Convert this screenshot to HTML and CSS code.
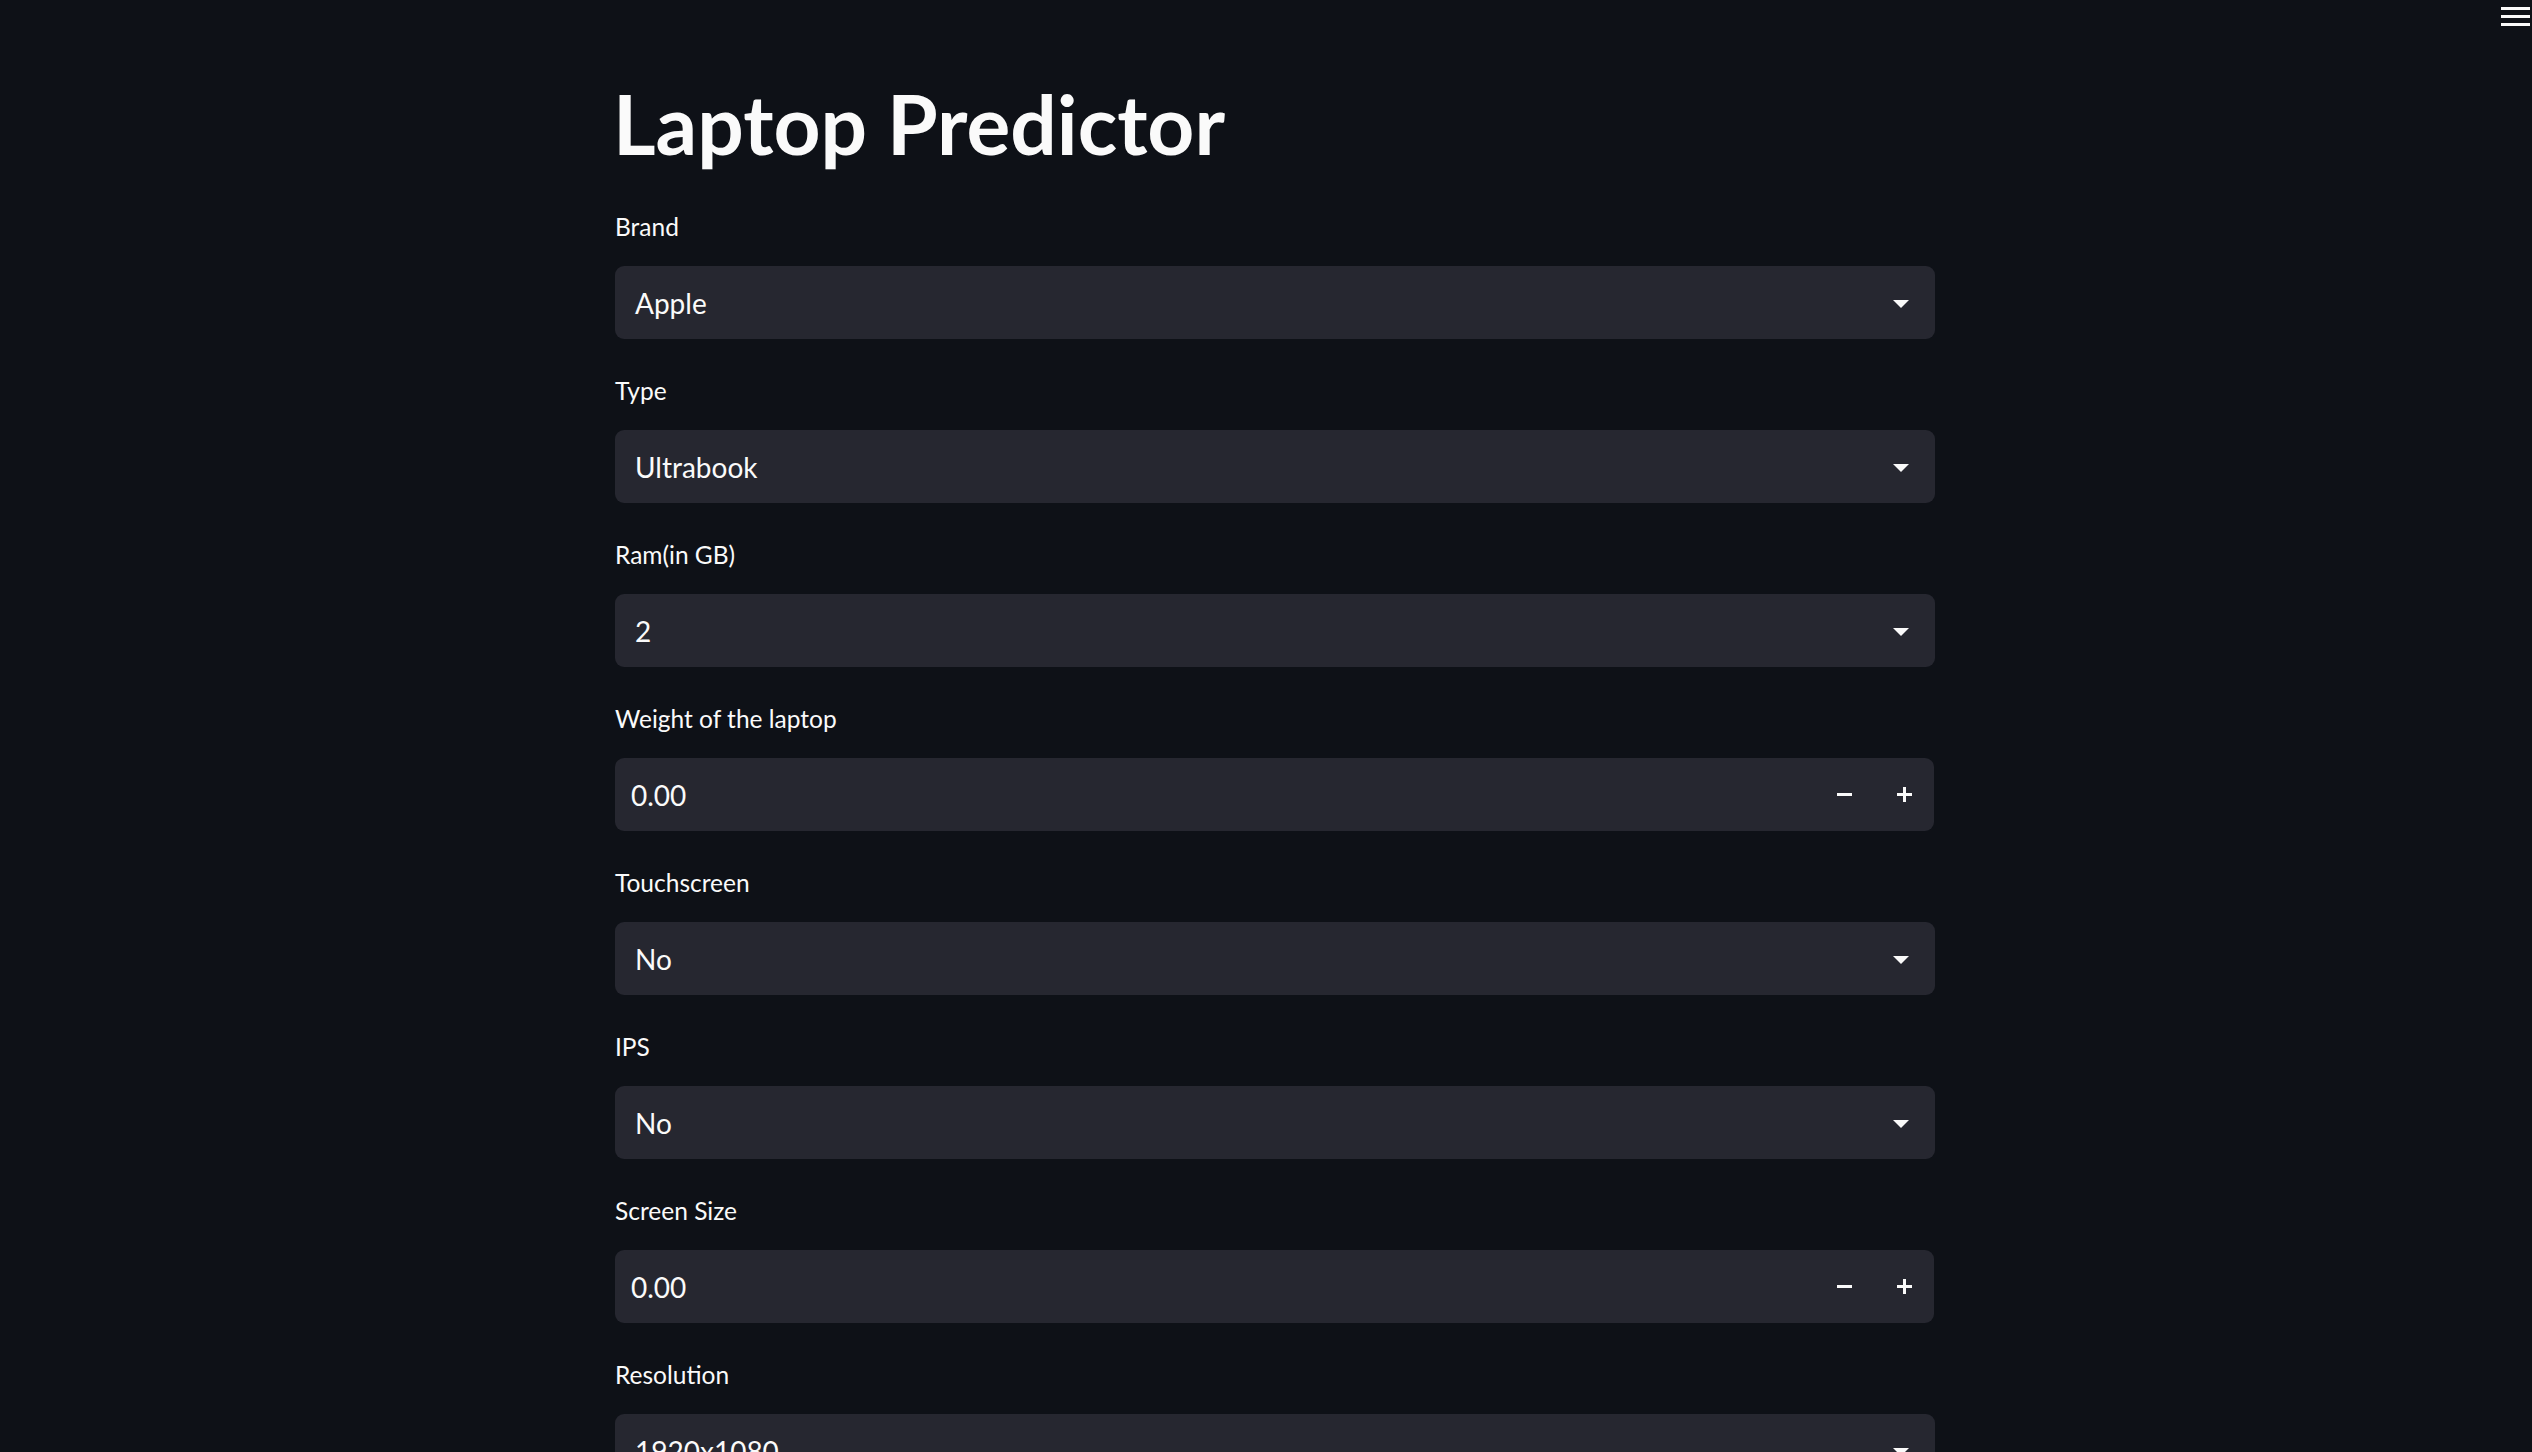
FILE: index.html
```html
<!DOCTYPE html>
<html lang="en">
<head>
<meta charset="utf-8">
<title>Laptop Predictor</title>
<link rel="stylesheet" href="styles.css">
</head>
<body>
<header class="app-header">
  <button class="menu-btn" aria-label="Menu">
    <span class="bar"></span><span class="bar"></span><span class="bar"></span>
  </button>
</header>
<main class="block">
  <h1 class="title">Laptop Predictor</h1>

  <div class="field">
    <label class="label">Brand</label>
    <div class="select"><span class="value">Apple</span><span class="caret"></span></div>
  </div>

  <div class="field">
    <label class="label">Type</label>
    <div class="select"><span class="value">Ultrabook</span><span class="caret"></span></div>
  </div>

  <div class="field">
    <label class="label">Ram(in GB)</label>
    <div class="select"><span class="value">2</span><span class="caret"></span></div>
  </div>

  <div class="field">
    <label class="label">Weight of the laptop</label>
    <div class="number">
      <span class="num-value">0.00</span>
      <button class="step" aria-label="Decrement"><span class="minus"></span></button>
      <button class="step" aria-label="Increment"><span class="plus"></span></button>
    </div>
  </div>

  <div class="field">
    <label class="label">Touchscreen</label>
    <div class="select"><span class="value">No</span><span class="caret"></span></div>
  </div>

  <div class="field">
    <label class="label">IPS</label>
    <div class="select"><span class="value">No</span><span class="caret"></span></div>
  </div>

  <div class="field">
    <label class="label">Screen Size</label>
    <div class="number">
      <span class="num-value">0.00</span>
      <button class="step" aria-label="Decrement"><span class="minus"></span></button>
      <button class="step" aria-label="Increment"><span class="plus"></span></button>
    </div>
  </div>

  <div class="field">
    <label class="label">Resolution</label>
    <div class="select"><span class="value">1920x1080</span><span class="caret"></span></div>
  </div>
</main>
</body>
</html>
```
FILE: styles.css
```css
html, body {
  margin: 0;
  padding: 0;
  height: 100%;
  overflow: hidden;
}
body {
  background: #0e1117;
  color: #fafafa;
  font-family: Lato, "Noto Sans", sans-serif;
}
.app-header {
  position: absolute;
  top: 0;
  right: 0;
}
.menu-btn {
  display: flex;
  flex-direction: column;
  gap: 5px;
  padding: 7px 2px 0 0;
  background: none;
  border: 0;
  cursor: pointer;
}
.menu-btn .bar {
  display: block;
  width: 29px;
  height: 3px;
  background: #fafafa;
}
.block {
  width: 1320px;
  margin-left: calc(50% - 651px);
  padding-top: 75px;
}
.title {
  margin: 0 0 40px -2px;
  font-size: 82px;
  line-height: 96px;
  font-weight: 700;
  letter-spacing: 0;
}
.field {
  margin-bottom: 36px;
}
.label {
  display: block;
  font-size: 24.5px;
  line-height: 32px;
  height: 32px;
  margin-bottom: 23px;
}
.select, .number {
  height: 73px;
  background: #262730;
  border-radius: 9px;
  display: flex;
  align-items: center;
  box-sizing: border-box;
}
.select {
  padding: 0 26px 0 20px;
}
.value, .num-value {
  flex: 1;
  font-size: 28px;
}
.num-value {
  padding-left: 16px;
}
.caret {
  width: 0;
  height: 0;
  border-left: 8px solid transparent;
  border-right: 8px solid transparent;
  border-top: 8px solid #fafafa;
  margin-top: 3px;
}
.number {
  width: 1319px;
}
.step {
  width: 60px;
  height: 100%;
  background: none;
  border: 0;
  padding: 0;
  display: flex;
  align-items: center;
  justify-content: center;
  cursor: pointer;
}
.minus, .plus {
  position: relative;
  display: block;
  width: 15px;
  height: 15px;
}
.minus::before, .plus::before, .plus::after {
  content: "";
  position: absolute;
  background: #fafafa;
}
.minus::before, .plus::before {
  left: 0;
  top: 6px;
  width: 15px;
  height: 3px;
}
.plus::after {
  left: 6px;
  top: 0;
  width: 3px;
  height: 15px;
}
```
